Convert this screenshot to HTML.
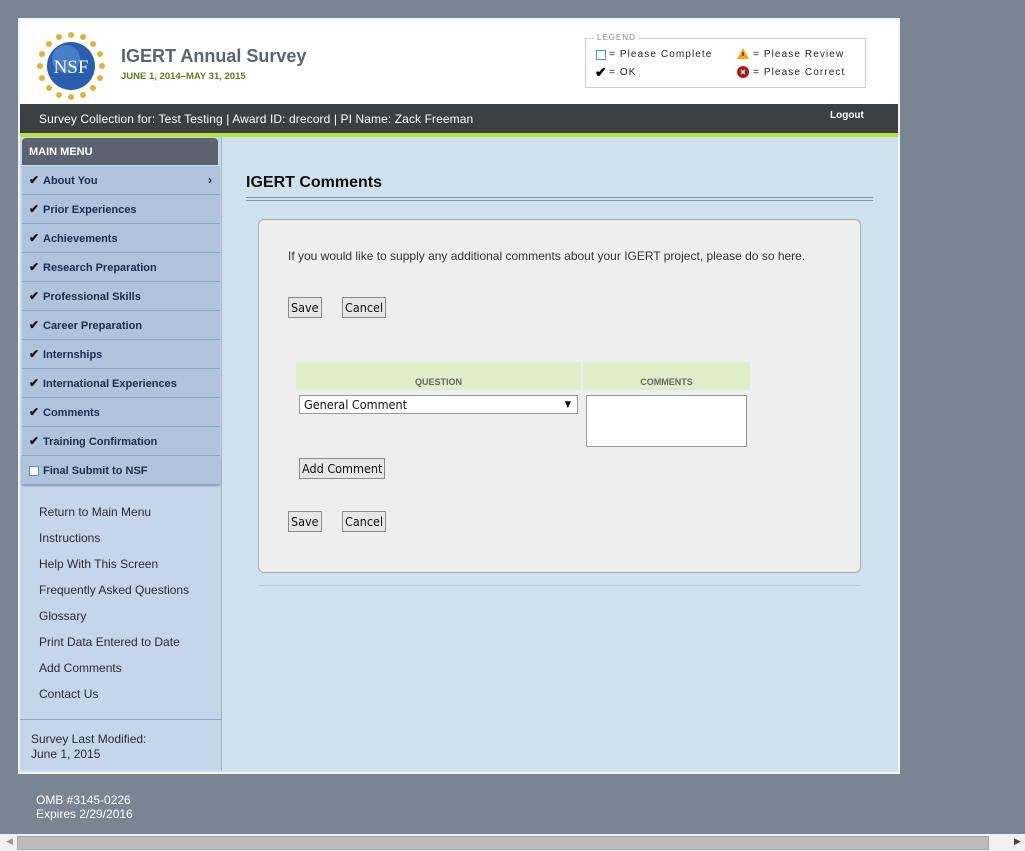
<!DOCTYPE html>
<html><head><style>
body{margin:0;width:1025px;height:851px;background:#7a8594;font-family:"Liberation Sans",Arial,sans-serif;position:relative;overflow:hidden}
.abs{position:absolute}
#frame{left:18px;top:18px;width:878px;height:752px;border:2px solid #f2f4f6;background:#d0e1ee}
#hdr{left:20px;top:20px;width:878px;height:84px;background:#fff}
#bar{left:20px;top:104px;width:878px;height:29px;background:#3b4043;color:#fff;font-size:12px}
#green{left:20px;top:133px;width:878px;height:4px;background:#b8e33a}
#side{left:20px;top:137px;width:201px;height:633px;background:#c5d5ea;border-right:1px solid #9fb2cc}
.mh{left:22px;top:138px;width:196px;height:27px;background:#5c6370;border-radius:4px 4px 0 0;color:#fff;font-size:11px;font-weight:bold;line-height:28px;text-indent:7px}
.it{left:22px;width:198px;height:28px;background:#afc3dd;border-bottom:1px solid #8fa6c4;font-size:11px;font-weight:bold;color:#1c2c4e;line-height:31px}
.it span{position:absolute;left:7px;color:#111;font-size:12px;line-height:28px}
.it b{position:absolute;left:21px}
.lk{left:39px;font-size:12px;color:#2a2a3a}
.leg{position:absolute;font-size:10px;letter-spacing:1.1px;color:#222}
.btn{position:absolute;background:#e6e6e6;border:1px solid #8a8a8a;font-size:12.5px;color:#111;height:21px;line-height:20px;padding:0 2px;font-family:"DejaVu Sans Condensed","DejaVu Sans",sans-serif;box-sizing:border-box}
</style></head><body>
<div id="frame" class="abs"></div>
<div id="hdr" class="abs"></div>
<svg class="abs" style="left:36px;top:31px" width="70" height="70" viewBox="0 0 70 70">
<g fill="#e3b23c">
<circle cx="35" cy="4" r="3"/><circle cx="35" cy="66" r="3"/><circle cx="4" cy="35" r="3"/><circle cx="66" cy="35" r="3"/>
<circle cx="13" cy="13" r="3"/><circle cx="57" cy="57" r="3"/><circle cx="57" cy="13" r="3"/><circle cx="13" cy="57" r="3"/>
<circle cx="23" cy="6" r="3"/><circle cx="47" cy="6" r="3"/><circle cx="23" cy="64" r="3"/><circle cx="47" cy="64" r="3"/>
<circle cx="6" cy="23" r="3"/><circle cx="6" cy="47" r="3"/><circle cx="64" cy="23" r="3"/><circle cx="64" cy="47" r="3"/></g>
<circle cx="35" cy="35" r="24" fill="#2a5fb0"/><circle cx="30" cy="28" r="14" fill="#5d92d8" opacity=".6"/>
<text x="35" y="42" text-anchor="middle" font-family="Liberation Serif" font-size="19" fill="#fff">NSF</text></svg>
<div class="abs" style="left:121px;top:46px;font-size:18px;font-weight:bold;color:#5a6472">IGERT Annual Survey</div>
<div class="abs" style="left:121px;top:71px;font-size:9.5px;font-weight:bold;color:#5f7d1e">JUNE 1, 2014–MAY 31, 2015</div>
<div class="abs" style="left:585px;top:38px;width:279px;height:48px;border:1px solid #ccc"></div>
<div class="abs" style="left:594px;top:33px;background:#fff;padding:0 3px;font-size:8px;letter-spacing:1px;color:#888">LEGEND</div>
<div class="abs" style="left:596px;top:50px;width:8px;height:8px;border:1px solid #4b9bb0"></div>
<div class="leg" style="left:609px;top:49px">= Please Complete</div>
<div class="abs" style="left:595px;top:64px;font-size:14px;font-weight:bold">✔</div>
<div class="leg" style="left:609px;top:67px">= OK</div>
<svg class="abs" style="left:737px;top:48px" width="12" height="11"><path d="M6 0L12 11H0Z" fill="#e8a820"/><rect x="5.3" y="4" width="1.4" height="4" fill="#a00"/></svg>
<div class="leg" style="left:753px;top:49px">= Please Review</div>
<svg class="abs" style="left:737px;top:66px" width="12" height="12"><circle cx="6" cy="6" r="6" fill="#b01515"/><path d="M4 4L8 8M8 4L4 8" stroke="#fff" stroke-width="1.3"/></svg>
<div class="leg" style="left:753px;top:67px">= Please Correct</div>
<div id="bar" class="abs"><div class="abs" style="left:19px;top:8px;letter-spacing:.1px">Survey Collection for: Test Testing | Award ID: drecord | PI Name: Zack Freeman</div><div class="abs" style="left:810px;top:6px;font-size:10px;font-weight:bold">Logout</div></div>
<div id="green" class="abs"></div>
<div id="side" class="abs"></div>
<div class="abs mh">MAIN MENU</div>
<div class="abs it" style="top:166px"><span>✔</span><b>About You</b><span style="left:186px;font-size:12px">›</span></div>
<div class="abs it" style="top:195px"><span>✔</span><b>Prior Experiences</b></div>
<div class="abs it" style="top:224px"><span>✔</span><b>Achievements</b></div>
<div class="abs it" style="top:253px"><span>✔</span><b>Research Preparation</b></div>
<div class="abs it" style="top:282px"><span>✔</span><b>Professional Skills</b></div>
<div class="abs it" style="top:311px"><span>✔</span><b>Career Preparation</b></div>
<div class="abs it" style="top:340px"><span>✔</span><b>Internships</b></div>
<div class="abs it" style="top:369px"><span>✔</span><b>International Experiences</b></div>
<div class="abs it" style="top:398px"><span>✔</span><b>Comments</b></div>
<div class="abs it" style="top:427px"><span>✔</span><b>Training Confirmation</b></div>
<div class="abs it" style="top:456px;box-shadow:0 1px 2px #8a9ab0"><div class="abs" style="left:7px;top:10px;width:8px;height:8px;border:1px solid #4b9bb0;background:#fff"></div><b>Final Submit to NSF</b></div>
<div class="abs lk" style="top:505px">Return to Main Menu</div>
<div class="abs lk" style="top:531px">Instructions</div>
<div class="abs lk" style="top:557px">Help With This Screen</div>
<div class="abs lk" style="top:583px">Frequently Asked Questions</div>
<div class="abs lk" style="top:609px">Glossary</div>
<div class="abs lk" style="top:635px">Print Data Entered to Date</div>
<div class="abs lk" style="top:661px">Add Comments</div>
<div class="abs lk" style="top:687px">Contact Us</div>
<div class="abs" style="left:20px;top:719px;width:201px;height:1px;background:#8fa6c4"></div>
<div class="abs" style="left:31px;top:732px;font-size:12px;color:#2a2a3a;line-height:15px">Survey Last Modified:<br>June 1, 2015</div>
<div class="abs" style="left:246px;top:174px;font-size:16px;font-weight:bold;color:#111">IGERT Comments</div>
<div class="abs" style="left:246px;top:197px;width:627px;height:2px;border-top:1px solid #8a94a0;border-bottom:1px solid #8a94a0"></div>
<div class="abs" style="left:258px;top:219px;width:601px;height:352px;background:#eee;border:1px solid #aaa;border-radius:6px"></div>
<div class="abs" style="left:288px;top:249px;font-size:12px;color:#333">If you would like to supply any additional comments about your IGERT project, please do so here.</div>
<div class="btn" style="left:288px;top:297px">Save</div>
<div class="btn" style="left:342px;top:297px">Cancel</div>
<div class="abs" style="left:296px;top:362px;width:285px;height:28px;background:#dfedc8"></div>
<div class="abs" style="left:583px;top:362px;width:167px;height:28px;background:#dfedc8"></div>
<div class="abs" style="left:296px;top:377px;width:285px;text-align:center;font-size:9px;font-weight:bold;color:#666">QUESTION</div>
<div class="abs" style="left:583px;top:377px;width:167px;text-align:center;font-size:9px;font-weight:bold;color:#666">COMMENTS</div>
<div class="abs" style="left:299px;top:395px;width:277px;height:17px;background:#fff;border:1px solid #999;font-size:12.5px;font-family:'DejaVu Sans Condensed','DejaVu Sans',sans-serif;line-height:18px;text-indent:4px;color:#111">General Comment<span style="position:absolute;right:6px;font-size:9px">▼</span></div>
<div class="abs" style="left:586px;top:395px;width:159px;height:50px;background:#fff;border:1px solid #999"></div>
<div class="btn" style="left:299px;top:458px">Add Comment</div>
<div class="btn" style="left:288px;top:511px">Save</div>
<div class="btn" style="left:342px;top:511px">Cancel</div>
<div class="abs" style="left:258px;top:585px;width:602px;height:1px;background:#bccbd8"></div>
<div class="abs" style="left:36px;top:793px;font-size:12px;color:#fff;line-height:14px">OMB #3145-0226<br>Expires 2/29/2016</div>
<div class="abs" style="left:0;top:834px;width:1025px;height:17px;background:#f0f0f0"></div>
<div class="abs" style="left:17px;top:836px;width:970px;height:12px;background:#bcbcbc;border:1px solid #a8a8a8"></div>
<div class="abs" style="left:6px;top:836px;font-size:9px;color:#999">◀</div>
<div class="abs" style="left:1014px;top:836px;font-size:9px;color:#444">▶</div>
</body></html>
